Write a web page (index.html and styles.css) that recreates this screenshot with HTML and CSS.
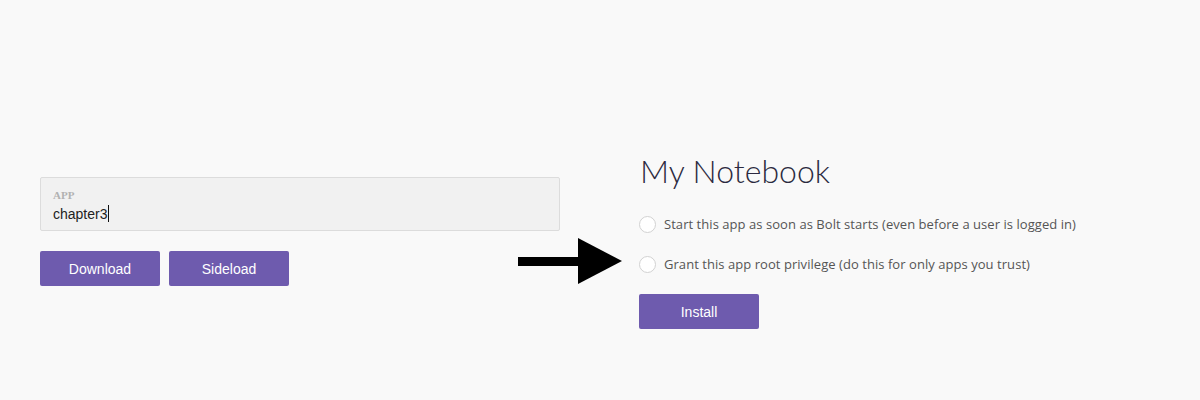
FILE: index.html
```html
<!DOCTYPE html>
<html lang="en">
<head>
<meta charset="utf-8">
<title>My Notebook</title>
<link rel="stylesheet" href="styles.css">
</head>
<body>
<main class="page">
  <section class="left">
    <div class="field">
      <div class="field-label">APP</div>
      <div class="field-value">chapter3<span class="caret"></span></div>
    </div>
    <div class="actions">
      <button class="btn">Download</button>
      <button class="btn">Sideload</button>
    </div>
  </section>
  <section class="right">
    <h1 class="title">My Notebook</h1>
    <label class="option"><span class="radio"></span>Start this app as soon as Bolt starts (even before a user is logged in)</label>
    <label class="option"><span class="radio"></span>Grant this app root privilege (do this for only apps you trust)</label>
    <div class="actions">
      <button class="btn">Install</button>
    </div>
  </section>
  <svg class="arrow" width="106" height="46" viewBox="0 0 106 46" aria-hidden="true">
    <rect x="0" y="19" width="64" height="9" fill="#000"/>
    <polygon points="60,0 104,23 60,46" fill="#000"/>
  </svg>
</main>
</body>
</html>
```
FILE: styles.css
```css
html, body {
  margin: 0;
  padding: 0;
  background: #f9f9f9;
}
body {
  font-family: "Liberation Sans", Arial, sans-serif;
}
.page {
  position: relative;
  display: grid;
  grid-template-columns: 520px 520px;
  column-gap: 79px;
  padding: 0 40px;
  height: 400px;
  box-sizing: border-box;
}
.left {
  padding-top: 177px;
}
.field {
  height: 54px;
  box-sizing: border-box;
  background: #f1f1f1;
  border: 1px solid #dcdcdc;
  border-radius: 2px;
  padding: 11px 12px 0;
}
.field-label {
  font-family: "Liberation Serif", "Times New Roman", serif;
  font-weight: bold;
  font-size: 11px;
  line-height: 12px;
  color: #b1b1b1;
}
.field-value {
  margin-top: 4px;
  font-size: 14px;
  line-height: 16px;
  color: #222;
  display: flex;
  align-items: center;
}
.caret {
  display: inline-block;
  width: 1px;
  height: 17px;
  background: #111;
  margin-left: 1px;
}
.actions {
  display: flex;
  gap: 9px;
  margin-top: 20px;
}
.btn {
  width: 120px;
  height: 35px;
  border: none;
  border-radius: 2px;
  background: #6e5bae;
  color: #fff;
  font-family: "Liberation Sans", Arial, sans-serif;
  font-size: 14px;
  padding: 0;
  cursor: pointer;
}
.right {
  padding-top: 146px;
}
.title {
  margin: 0 0 18px 1px;
  font-family: Lato, sans-serif;
  font-weight: 300;
  font-size: 32px;
  line-height: 50px;
  color: #2c2a40;
}
.option {
  display: flex;
  align-items: center;
  height: 20px;
  margin-bottom: 20px;
  font-family: "Open Sans", sans-serif;
  font-size: 13px;
  color: #555;
  letter-spacing: 0.05px;
}
.radio {
  width: 17px;
  height: 17px;
  box-sizing: border-box;
  border: 1px solid #d2d2d2;
  border-radius: 50%;
  background: #fff;
  margin-right: 8px;
  flex: none;
}
.right .actions {
  margin-top: 1px;
}
.arrow {
  position: absolute;
  left: 518px;
  top: 238px;
}
```
